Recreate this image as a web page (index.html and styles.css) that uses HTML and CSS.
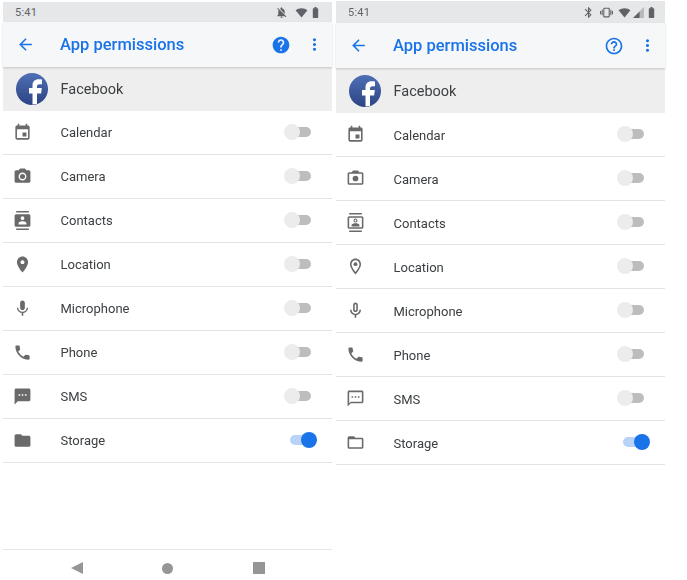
FILE: index.html
```html
<!DOCTYPE html>
<html lang="en">
<head>
  <meta charset="UTF-8">
  <title>App permissions</title>
  <link rel="stylesheet" href="styles.css">
</head>
<body>
  <svg class="defs" aria-hidden="true">
    <symbol id="i-back" viewBox="0 0 24 24"><path d="M20 11H7.83l5.59-5.59L12 4l-8 8 8 8 1.41-1.41L7.83 13H20v-2z"/></symbol>
    <symbol id="i-more" viewBox="0 0 24 24"><path d="M12 8c1.1 0 2-.9 2-2s-.9-2-2-2-2 .9-2 2 .9 2 2 2zm0 2c-1.1 0-2 .9-2 2s.9 2 2 2 2-.9 2-2-.9-2-2-2zm0 6c-1.1 0-2 .9-2 2s.9 2 2 2 2-.9 2-2-.9-2-2-2z"/></symbol>
    <symbol id="i-help" viewBox="0 0 24 24"><path d="M12 2C6.48 2 2 6.48 2 12s4.48 10 10 10 10-4.48 10-10S17.52 2 12 2zm1 17h-2v-2h2v2zm2.07-7.75l-.9.92C13.45 12.9 13 13.5 13 15h-2v-.5c0-1.1.45-2.1 1.17-2.83l1.24-1.26c.37-.36.59-.86.59-1.41 0-1.1-.9-2-2-2s-2 .9-2 2H8c0-2.21 1.79-4 4-4s4 1.79 4 4c0 .88-.36 1.68-.93 2.25z"/></symbol>
    <symbol id="i-help-o" viewBox="0 0 24 24"><path d="M11 18h2v-2h-2v2zm1-16C6.48 2 2 6.48 2 12s4.48 10 10 10 10-4.48 10-10S17.52 2 12 2zm0 18c-4.41 0-8-3.59-8-8s3.59-8 8-8 8 3.59 8 8-3.59 8-8 8zm0-14c-2.21 0-4 1.79-4 4h2c0-1.1.9-2 2-2s2 .9 2 2c0 2-3 1.75-3 5h2c0-2.25 3-2.5 3-5 0-2.21-1.79-4-4-4z"/></symbol>
    <symbol id="i-bell-off" viewBox="0 0 24 24"><path d="M20 18.69L7.84 6.14 5.27 3.49 4 4.76l2.8 2.8v.01c-.52.99-.8 2.16-.8 3.42v5l-2 2v1h13.73l2 2L21 19.72l-1-1.03zM12 22c1.11 0 2-.89 2-2h-4c0 1.11.89 2 2 2zm6-7.32V11c0-3.08-1.64-5.64-4.5-6.32V4c0-.83-.67-1.5-1.5-1.5s-1.5.67-1.5 1.5v.68c-.15.03-.29.08-.42.12-.1.03-.2.07-.3.11-.2.08-.4.17-.59.27L18 14.68z"/></symbol>
    <symbol id="i-wifi" viewBox="0 0 24 24"><path d="M12 21L1 8c3-2.5 7-4 11-4s8 1.5 11 4z"/></symbol>
    <symbol id="i-battery" viewBox="0 0 24 24"><path d="M15.67 4H14V2h-4v2H8.33C7.6 4 7 4.6 7 5.33v15.33C7 21.4 7.6 22 8.33 22h7.33c.74 0 1.34-.6 1.34-1.33V5.33C17 4.6 16.4 4 15.67 4z"/></symbol>
    <symbol id="i-bluetooth" viewBox="0 0 24 24"><path d="M17.71 7.71L12 2h-1v7.59L6.41 5 5 6.41 10.59 12 5 17.59 6.41 19 11 14.41V22h1l5.71-5.71-4.3-4.29 4.3-4.29zM13 5.83l1.88 1.88L13 9.59V5.83zm1.88 10.46L13 18.17v-3.76l1.88 1.88z"/></symbol>
    <symbol id="i-vibrate" viewBox="0 0 24 24"><path d="M0 15h2V9H0v6zm3 2h2V7H3v10zm19-8v6h2V9h-2zm-3 8h2V7h-2v10zM16.5 3h-9C6.67 3 6 3.67 6 4.5v15c0 .83.67 1.5 1.5 1.5h9c.83 0 1.5-.67 1.5-1.5v-15c0-.83-.67-1.5-1.5-1.5zM16 19H8V5h8v14z"/></symbol>
    <symbol id="i-signal" viewBox="0 0 24 24"><path opacity=".35" d="M2 22h20V2z"/><path d="M2 22h12V10z"/></symbol>
    <symbol id="i-facebook" viewBox="0 0 32 32"><circle cx="16" cy="16" r="16" fill="url(#fb-fill)"/><path fill="#fff" d="M16.5 31.500V20.500H13V15h3.500v-2.500c0-4 2.400-6.200 6-6.200 1.700 0 3 .1 3.500.2v4.800h-2.500c-2 0-2.500 1-2.500 2.500V15h4.800l-.7 5.500h-4.100v10.500z"/></symbol>
    <linearGradient id="fb-fill" x1="0" y1="0" x2="0" y2="1"><stop offset="0" stop-color="#4f6fb5"/><stop offset="1" stop-color="#2c4484"/></linearGradient>

    <symbol id="i-calendar" viewBox="0 0 24 24"><path d="M17 12h-5v5h5v-5zM16 1v2H8V1H6v2H5c-1.110 0-1.990.9-1.990 2L3 19c0 1.100.89 2 2 2h14c1.100 0 2-.9 2-2V5c0-1.100-.9-2-2-2h-1V1h-2zm3 18H5V8h14v11z"/></symbol>
    <symbol id="i-camera" viewBox="0 0 24 24"><circle cx="12" cy="12" r="3.200"/><path d="M9 2L7.170 4H4c-1.100 0-2 .9-2 2v12c0 1.100.9 2 2 2h16c1.100 0 2-.9 2-2V6c0-1.100-.9-2-2-2h-3.170L15 2H9zm3 15c-2.760 0-5-2.240-5-5s2.240-5 5-5 5 2.240 5 5-2.240 5-5 5z"/></symbol>
    <symbol id="i-contacts" viewBox="0 0 24 24"><path d="M20 0H4v2h16V0zM4 24h16v-2H4v2zM20 4H4c-1.100 0-2 .9-2 2v12c0 1.100.9 2 2 2h16c1.100 0 2-.9 2-2V6c0-1.100-.9-2-2-2zm-8 2.750c1.240 0 2.250 1.010 2.250 2.250s-1.010 2.250-2.250 2.250S9.750 10.240 9.750 9 10.760 6.750 12 6.750zM17 17H7v-1.500c0-1.670 3.330-2.500 5-2.500s5 .83 5 2.500V17z"/></symbol>
    <symbol id="i-place" viewBox="0 0 24 24"><path d="M12 2C8.130 2 5 5.130 5 9c0 5.250 7 13 7 13s7-7.750 7-13c0-3.870-3.130-7-7-7zm0 9.500c-1.380 0-2.500-1.120-2.500-2.500s1.120-2.500 2.500-2.500 2.500 1.120 2.500 2.500-1.120 2.500-2.500 2.500z"/></symbol>
    <symbol id="i-mic" viewBox="0 0 24 24"><path d="M12 14c1.660 0 2.990-1.340 2.990-3L15 5c0-1.660-1.340-3-3-3S9 3.340 9 5v6c0 1.660 1.340 3 3 3zm5.300-3c0 3-2.540 5.100-5.300 5.100S6.700 14 6.700 11H5c0 3.410 2.720 6.230 6 6.720V21h2v-3.280c3.280-.48 6-3.300 6-6.720h-1.700z"/></symbol>
    <symbol id="i-phone" viewBox="0 0 24 24"><path d="M6.620 10.790c1.440 2.830 3.760 5.140 6.590 6.590l2.200-2.200c.27-.27.67-.36 1.020-.24 1.120.37 2.330.57 3.570.57.55 0 1 .45 1 1V20c0 .55-.45 1-1 1-9.390 0-17-7.610-17-17 0-.55.45-1 1-1h3.500c.55 0 1 .45 1 1 0 1.250.2 2.450.57 3.570.11.35.03.74-.25 1.020l-2.200 2.200z"/></symbol>
    <symbol id="i-sms" viewBox="0 0 24 24"><path d="M20 2H4c-1.100 0-1.990.9-1.990 2L2 22l4-4h14c1.100 0 2-.9 2-2V4c0-1.100-.9-2-2-2zM9 11H7V9h2v2zm4 0h-2V9h2v2zm4 0h-2V9h2v2z"/></symbol>
    <symbol id="i-folder" viewBox="0 0 24 24"><path d="M10 4H4c-1.100 0-1.990.9-1.990 2L2 18c0 1.100.9 2 2 2h16c1.100 0 2-.9 2-2V8c0-1.100-.9-2-2-2h-8l-2-2z"/></symbol>

    <symbol id="o-camera" viewBox="0 0 24 24"><circle cx="12" cy="12" r="3.600"/><path d="M20 4h-3.170L15 2H9L7.170 4H4c-1.100 0-2 .9-2 2v12c0 1.100.9 2 2 2h16c1.100 0 2-.9 2-2V6c0-1.100-.9-2-2-2zm0 14H4V6h16v12z"/></symbol>
    <symbol id="o-contacts" viewBox="0 0 24 24"><path d="M20 0H4v2h16V0zM4 24h16v-2H4v2zM20 4H4c-1.100 0-2 .9-2 2v12c0 1.100.9 2 2 2h16c1.100 0 2-.9 2-2V6c0-1.100-.9-2-2-2zm0 14H4V6h16v12z"/><path d="M12 12c1.400 0 2.500-1.100 2.500-2.500S13.400 7 12 7 9.500 8.100 9.500 9.500 10.600 12 12 12zm0-3.700a1.200 1.200 0 110 2.400 1.200 1.200 0 010-2.400zM7 17h10v-1.500c0-1.670-3.330-2.500-5-2.500s-5 .83-5 2.500V17z"/></symbol>
    <symbol id="o-place" viewBox="0 0 24 24"><path d="M12 2C8.130 2 5 5.130 5 9c0 5.250 7 13 7 13s7-7.750 7-13c0-3.870-3.130-7-7-7zM7 9c0-2.760 2.240-5 5-5s5 2.240 5 5c0 2.880-2.880 7.190-5 9.880C9.920 16.210 7 11.850 7 9z"/><circle cx="12" cy="9" r="2.500"/></symbol>
    <symbol id="o-mic" viewBox="0 0 24 24"><path d="M12 14c1.660 0 3-1.340 3-3V5c0-1.660-1.340-3-3-3S9 3.340 9 5v6c0 1.660 1.340 3 3 3zm-1-9c0-.55.45-1 1-1s1 .45 1 1v6c0 .55-.45 1-1 1s-1-.45-1-1V5z"/><path d="M17 11c0 2.760-2.240 5-5 5s-5-2.240-5-5H5c0 3.530 2.610 6.430 6 6.920V21h2v-3.080c3.390-.49 6-3.390 6-6.920h-2z"/></symbol>
    <symbol id="o-sms" viewBox="0 0 24 24"><path d="M20 2H4c-1.100 0-2 .9-2 2v18l4-4h14c1.100 0 2-.9 2-2V4c0-1.100-.9-2-2-2zm0 14H6l-2 2V4h16v12z"/><path d="M7 9h2v2H7zM11 9h2v2h-2zM15 9h2v2h-2z"/></symbol>
    <symbol id="o-folder" viewBox="0 0 24 24"><path d="M20 6h-8l-2-2H4c-1.100 0-1.990.9-1.990 2L2 18c0 1.100.9 2 2 2h16c1.100 0 2-.9 2-2V8c0-1.100-.9-2-2-2zm0 12H4V8h16v10z"/></symbol>
  </svg>

  <main class="screens">
    <section class="phone phone-left">
      <div class="status">
        <span class="time">5:41</span>
        <svg class="status-icon"><use href="#i-bell-off"/></svg>
        <svg class="status-icon gap-7"><use href="#i-wifi"/></svg>
        <svg class="status-icon gap-1"><use href="#i-battery"/></svg>
      </div>
      <div class="toolbar">
        <svg class="back"><use href="#i-back"/></svg>
        <h1 class="title">App permissions</h1>
        <svg class="help"><use href="#i-help"/></svg>
        <svg class="more"><use href="#i-more"/></svg>
      </div>
      <div class="app">
        <svg class="app-logo"><use href="#i-facebook"/></svg>
        <span>Facebook</span>
      </div>
      <ul class="perms">
        <li class="perm"><svg class="perm-icon"><use href="#i-calendar"/></svg><span class="perm-name">Calendar</span><span class="switch"><span class="knob"></span></span></li>
        <li class="perm"><svg class="perm-icon"><use href="#i-camera"/></svg><span class="perm-name">Camera</span><span class="switch"><span class="knob"></span></span></li>
        <li class="perm"><svg class="perm-icon"><use href="#i-contacts"/></svg><span class="perm-name">Contacts</span><span class="switch"><span class="knob"></span></span></li>
        <li class="perm"><svg class="perm-icon"><use href="#i-place"/></svg><span class="perm-name">Location</span><span class="switch"><span class="knob"></span></span></li>
        <li class="perm"><svg class="perm-icon"><use href="#i-mic"/></svg><span class="perm-name">Microphone</span><span class="switch"><span class="knob"></span></span></li>
        <li class="perm"><svg class="perm-icon"><use href="#i-phone"/></svg><span class="perm-name">Phone</span><span class="switch"><span class="knob"></span></span></li>
        <li class="perm"><svg class="perm-icon"><use href="#i-sms"/></svg><span class="perm-name">SMS</span><span class="switch"><span class="knob"></span></span></li>
        <li class="perm"><svg class="perm-icon"><use href="#i-folder"/></svg><span class="perm-name">Storage</span><span class="switch on"><span class="knob"></span></span></li>
      </ul>
      <nav class="navbar">
        <span class="nav-back"></span>
        <span class="nav-home"></span>
        <span class="nav-recent"></span>
      </nav>
    </section>

    <section class="phone phone-right">
      <div class="status">
        <span class="time">5:41</span>
        <svg class="status-icon"><use href="#i-bluetooth"/></svg>
        <svg class="status-icon gap-5"><use href="#i-vibrate"/></svg>
        <svg class="status-icon gap-5"><use href="#i-wifi"/></svg>
        <svg class="status-icon gap-1"><use href="#i-signal"/></svg>
        <svg class="status-icon"><use href="#i-battery"/></svg>
      </div>
      <div class="toolbar">
        <svg class="back"><use href="#i-back"/></svg>
        <h1 class="title">App permissions</h1>
        <svg class="help"><use href="#i-help-o"/></svg>
        <svg class="more"><use href="#i-more"/></svg>
      </div>
      <div class="app">
        <svg class="app-logo"><use href="#i-facebook"/></svg>
        <span>Facebook</span>
      </div>
      <ul class="perms">
        <li class="perm"><svg class="perm-icon"><use href="#i-calendar"/></svg><span class="perm-name">Calendar</span><span class="switch"><span class="knob"></span></span></li>
        <li class="perm"><svg class="perm-icon"><use href="#o-camera"/></svg><span class="perm-name">Camera</span><span class="switch"><span class="knob"></span></span></li>
        <li class="perm"><svg class="perm-icon"><use href="#o-contacts"/></svg><span class="perm-name">Contacts</span><span class="switch"><span class="knob"></span></span></li>
        <li class="perm"><svg class="perm-icon"><use href="#o-place"/></svg><span class="perm-name">Location</span><span class="switch"><span class="knob"></span></span></li>
        <li class="perm"><svg class="perm-icon"><use href="#o-mic"/></svg><span class="perm-name">Microphone</span><span class="switch"><span class="knob"></span></span></li>
        <li class="perm"><svg class="perm-icon"><use href="#i-phone"/></svg><span class="perm-name">Phone</span><span class="switch"><span class="knob"></span></span></li>
        <li class="perm"><svg class="perm-icon"><use href="#o-sms"/></svg><span class="perm-name">SMS</span><span class="switch"><span class="knob"></span></span></li>
        <li class="perm"><svg class="perm-icon"><use href="#o-folder"/></svg><span class="perm-name">Storage</span><span class="switch on"><span class="knob"></span></span></li>
      </ul>
    </section>
  </main>
</body>
</html>
```

FILE: styles.css
```css
*{
  box-sizing: border-box;
  margin: 0;
  padding: 0;
}
html, body{
  height: 100%;
  overflow: hidden;
}
body{
  background-color: #fff;
  font-family: "Roboto", sans-serif;
  color: #3c4043;
}
.defs{
  position: absolute;
  width: 0;
  height: 0;
}
.screens{
  display: flex;
  gap: 4px;
  padding-left: 3px;
  filter: blur(.35px);
}
.phone{
  width: 329px;
  height: 578px;
  display: flex;
  flex-direction: column;
}
.phone-left{
  margin-top: 2px;
}
.phone-right{
  margin-top: 1px;
}

/* status bar */
.status{
  height: 20px;
  display: flex;
  align-items: center;
  justify-content: flex-end;
  padding-right: 10px;
  background-color: #e6e7e8;
  flex-shrink: 0;
}
.phone-right .status{
  height: 22px;
  padding-right: 7px;
}
.time{
  margin-right: auto;
  padding-left: 12px;
  font-size: 11px;
  letter-spacing: .2px;
  color: #5f6368;
}
.status-icon{
  width: 13px;
  height: 13px;
  fill: #5f6368;
}
.gap-1{
  margin-left: 1px;
}
.gap-5{
  margin-left: 5px;
}
.gap-7{
  margin-left: 7px;
}

/* toolbar */
.toolbar{
  height: 45px;
  display: flex;
  align-items: center;
  background-color: #f6f7f8;
  box-shadow: 0 1px 2px rgba(0, 0, 0, .18);
  position: relative;
  flex-shrink: 0;
}
.back{
  width: 19px;
  height: 19px;
  margin-left: 13px;
  fill: #1a73e8;
}
.title{
  flex: 1;
  margin-left: 25px;
  font-size: 16.5px;
  font-weight: 500;
  color: #1a73e8;
}
.help{
  width: 20px;
  height: 20px;
  fill: #1a73e8;
}
.more{
  width: 19px;
  height: 19px;
  margin-left: 14px;
  margin-right: 8px;
  fill: #1a73e8;
}

/* app row */
.app{
  height: 44px;
  display: flex;
  align-items: center;
  background-color: #eeeeee;
  font-size: 14.5px;
  flex-shrink: 0;
}
.phone-right .app{
  height: 45px;
  padding-top: 1px;
}
.app-logo{
  width: 32px;
  height: 32px;
  margin-left: 13px;
  margin-right: 12.500px;
}

/* permission list */
.perms{
  list-style: none;
}
.perm{
  height: 44px;
  display: flex;
  align-items: center;
  border-bottom: 1px solid #e3e3e3;
  font-size: 13px;
}
.perm-icon{
  width: 19px;
  height: 19px;
  margin-left: 9.500px;
  margin-right: 29px;
  fill: #6a6a6a;
}
.perm-name{
  flex: 1;
}
.phone-right .perm-name{
  padding-top: 1px;
}
.switch{
  position: relative;
  width: 21px;
  height: 10px;
  margin-right: 21px;
  margin-bottom: 1px;
  border-radius: 5px;
  background-color: #bdbdbd;
}
.knob{
  position: absolute;
  top: -3px;
  left: -6px;
  width: 16px;
  height: 16px;
  border-radius: 50%;
  background-color: #ececec;
}
.switch.on{
  background-color: #b9d3f8;
}
.switch.on .knob{
  left: auto;
  right: -6px;
  background-color: #1a73e8;
}

/* navigation bar */
.navbar{
  margin-top: auto;
  height: 31px;
  padding-top: 6px;
  display: flex;
  align-items: center;
  justify-content: center;
  gap: 79.500px;
  border-top: 1px solid #e6e6e6;
}
.nav-back{
  width: 0;
  height: 0;
  border-style: solid;
  border-width: 6.500px 12px 6.500px 0;
  border-color: transparent #969696 transparent transparent;
}
.nav-home{
  width: 11px;
  height: 11px;
  border-radius: 50%;
  background-color: #969696;
}
.nav-recent{
  width: 12px;
  height: 12px;
  background-color: #969696;
}
```
